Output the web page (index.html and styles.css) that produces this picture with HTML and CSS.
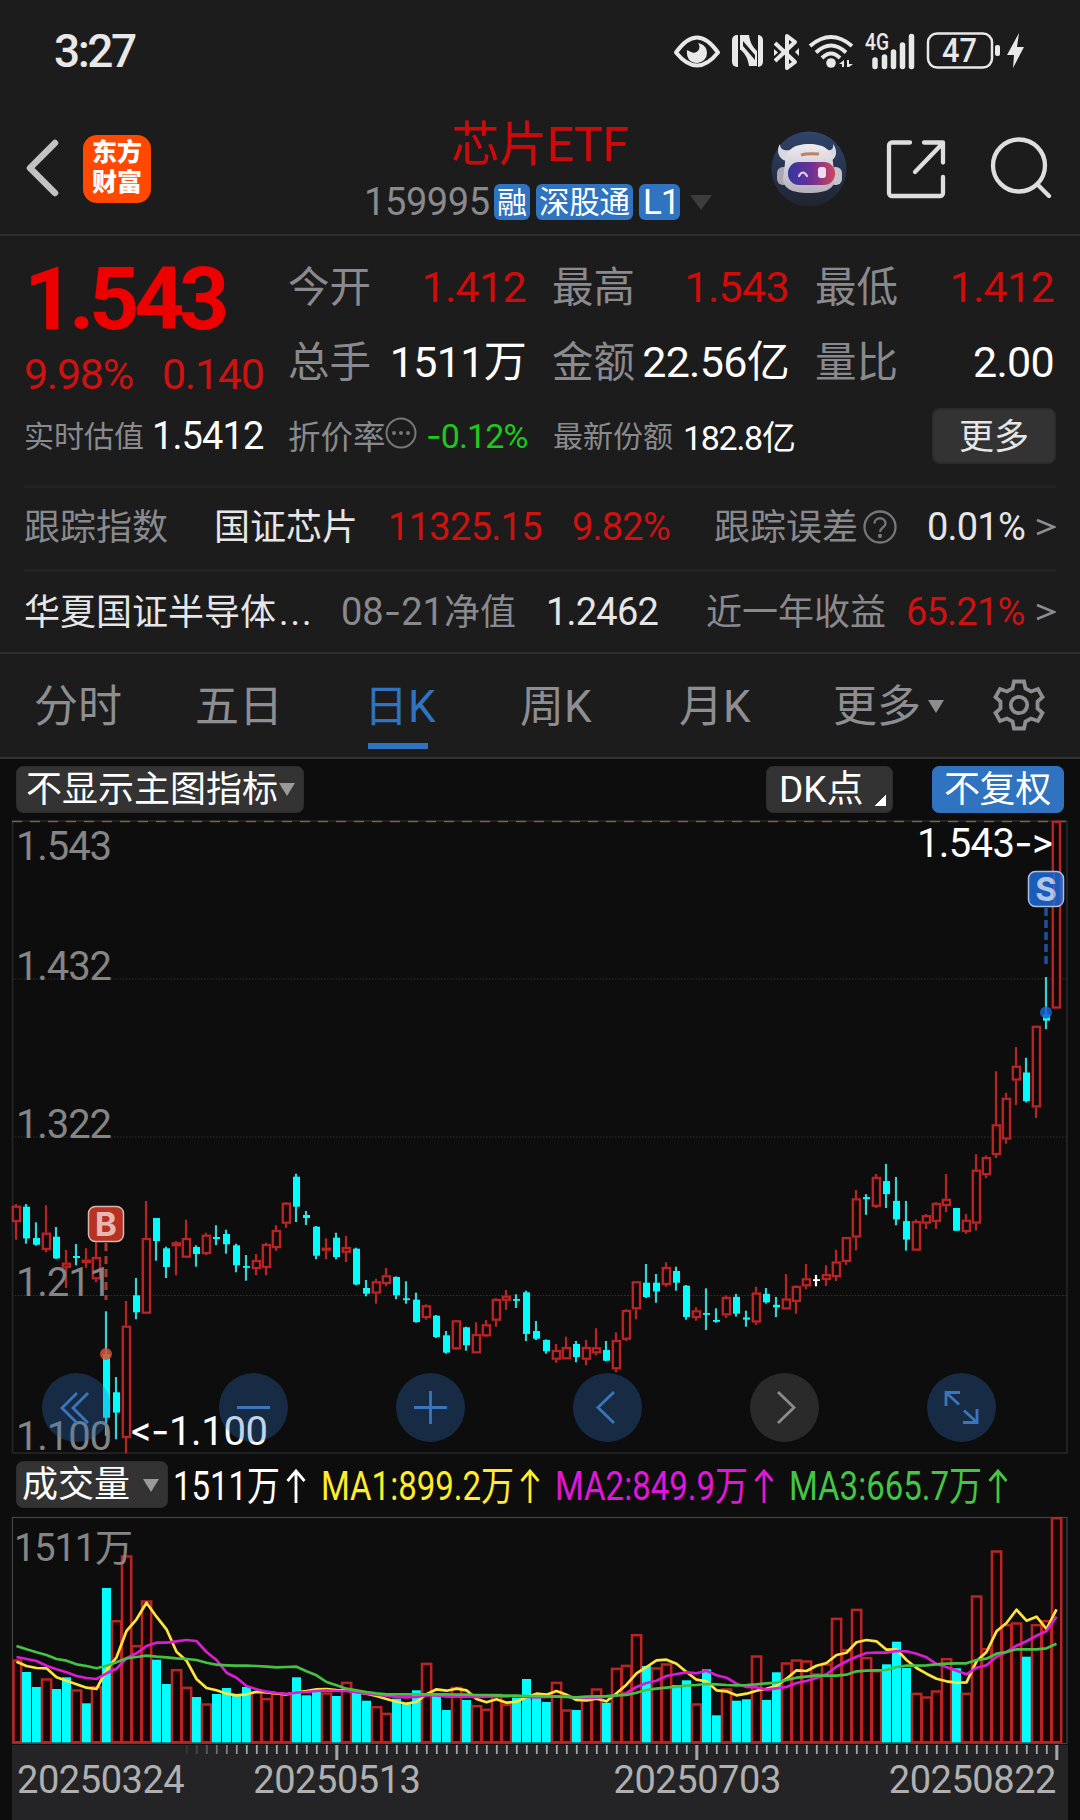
FILE: index.html
```html
<!DOCTYPE html>
<html lang="zh-CN">
<head>
<meta charset="utf-8">
<title>芯片ETF 159995</title>
<link rel="stylesheet" href="styles.css">
</head>
<body>
<div class="status">
  <span class="clock">3:27</span>
  <svg class="status-icons" width="352" height="48" viewBox="672 26 352 48" fill="#e8e8e8">
    <path d="M676 52.500q21-30 42 0q-21 26-42 0z" fill="none" stroke="#e8e8e8" stroke-width="4" stroke-linejoin="round"/>
    <path d="M698 43c4 5-1 12-7 9l-4-2c-1 9 4 13 10 13a10 10 0 0 0 10-10c0-6-4-9-9-10z"/>
    <path d="M738 35v32h-1a5 5 0 0 1-5-5V40a5 5 0 0 1 5-5z"/>
    <path d="M758 67V35a5 5 0 0 1 5 5v22a5 5 0 0 1-5 5z"/>
    <path d="M740 35h9c1 8 4 12 8 16v15h-8c-1-8-4-12-8-16l-1 0zM743 41v5l12 14v-5z" fill-rule="evenodd"/>
    <path d="M775 43l20 19-8 6V36l8 6-20 19" fill="none" stroke="#e8e8e8" stroke-width="4" stroke-linejoin="round"/>
    <path d="M774 49l4 3.500-4 3.500zM799 48l-4 4 4 4z"/>
    <g fill="none" stroke="#e8e8e8" stroke-width="4"><path d="M810 46q21-18 42 0M816 52.500q15-14 30 0M822 58q9-9 18 0"/></g>
    <circle cx="831" cy="63" r="4.800"/>
    <path d="M844 60v7h-2v-3h-3zM849 60v4h4l-4 3h-2v-7z"/>
    <text class="net" x="865" y="50" textLength="24" lengthAdjust="spacingAndGlyphs">4G</text>
    <g stroke="#e8e8e8" stroke-width="5.500" stroke-linecap="round"><path d="M875 60v6.500M884.500 57v9.500M893.500 52v14.500M902.500 45v21.500M911.500 36.500v30"/></g>
    <rect x="928" y="33.500" width="64" height="34" rx="9" fill="none" stroke="#e8e8e8" stroke-width="2.500"/>
    <text class="bat" x="942" y="62" textLength="35" lengthAdjust="spacingAndGlyphs">47</text>
    <rect x="995" y="45" width="5" height="11" rx="2"/>
    <path d="M1019 33l-12 22h7l-1 13 11-21h-7z"/>
  </svg>
</div>

<header class="head">
  <svg class="back" width="36" height="60" viewBox="0 0 36 60"><path d="M31 5L6 30l25 25" fill="none" stroke="#c2c2c2" stroke-width="6.500" stroke-linecap="round" stroke-linejoin="round"/></svg>
  <div class="logo"><span>东方</span><span>财富</span></div>
  <div class="title">
    <h1>芯片ETF</h1>
    <div class="code"><span class="num">159995</span><b>融</b><b class="wide">深股通</b><b class="lv">L1</b><i></i></div>
  </div>
  <svg class="robot" width="76" height="76" viewBox="0 0 76 76">
    <defs>
      <linearGradient id="sky" x1="0" y1="0" x2="0" y2="1"><stop offset="0" stop-color="#314569"/><stop offset=".5" stop-color="#27334f"/><stop offset="1" stop-color="#20242e"/></linearGradient>
      <linearGradient id="visor"><stop offset="0" stop-color="#3435a0"/><stop offset=".5" stop-color="#6b3195"/><stop offset="1" stop-color="#cc485c"/></linearGradient>
      <linearGradient id="shell" x1="0" y1="0" x2="0" y2="1"><stop offset="0" stop-color="#eeebef"/><stop offset="1" stop-color="#b5b0bc"/></linearGradient>
    </defs>
    <circle cx="38" cy="38" r="37.500" fill="url(#sky)"/>
    <path d="M9 13c-4 6-2 15 6 17l5-11c-6 1-11 0-11-6zM62 13c5 6 4 15-3 17l-5-11c5 1 9 0 8-6z" fill="#d9d7df"/>
    <rect x="6" y="36" width="13" height="18" rx="6" fill="#aaa6b2"/><rect x="58" y="36" width="13" height="18" rx="6" fill="#c6c3cd"/>
    <path d="M14 32c0-13 9-19 24-19s24 6 24 19l2 15c0 10-8 15-26 15s-26-5-26-15z" fill="url(#shell)"/>
    <rect x="17" y="31" width="47" height="23" rx="11" fill="url(#visor)"/>
    <path d="M28 45q4-7 8 0" fill="none" stroke="#ddd2ff" stroke-width="2.200" stroke-linecap="round"/>
    <rect x="47" y="36" width="8" height="11" rx="3" fill="#f0dcf2"/>
    <path d="M30 24q6-2 18-1" stroke="#bd8262" stroke-width="3" fill="none"/>
  </svg>
  <svg class="share" width="60" height="60" viewBox="0 0 60 60" fill="none" stroke="#dedede" stroke-width="4.300" stroke-linecap="round" stroke-linejoin="round"><path d="M24 3.500H6a3 3 0 0 0-3 3V54a3 3 0 0 0 3 3h48a3 3 0 0 0 3-3V38M38 3.500h19v20M56 5L29 33"/></svg>
  <svg class="search" width="62" height="62" viewBox="0 0 62 62" fill="none" stroke="#dedede" stroke-width="4.300" stroke-linecap="round"><circle cx="29" cy="29.500" r="26"/><path d="M48 49l11 11"/></svg>
</header>

<section class="quote">
  <div class="top">
    <div class="last">
      <div class="price">1.543</div>
      <div class="change"><span>9.98%</span><span>0.140</span></div>
    </div>
    <dl class="stats">
      <dt>今开</dt><dd class="red">1.412</dd><dt>最高</dt><dd class="red">1.543</dd><dt>最低</dt><dd class="red">1.412</dd>
      <dt>总手</dt><dd class="cn">1511万</dd><dt>金额</dt><dd class="cn">22.56亿</dd><dt>量比</dt><dd>2.00</dd>
    </dl>
  </div>
  <div class="row extra">
    <span class="lab">实时估值</span><span class="v1">1.5412</span>
    <span class="lab prem">折价率</span>
    <svg width="32" height="32" viewBox="0 0 32 32" fill="#77777a"><circle cx="16" cy="16" r="14.500" fill="none" stroke="#77777a" stroke-width="2"/><circle cx="9" cy="16" r="2"/><circle cx="16" cy="16" r="2"/><circle cx="23" cy="16" r="2"/></svg>
    <span class="v2 green"><i class="dash">-</i>0.12%</span>
    <span class="lab">最新份额</span><span class="v3">182.8亿</span>
    <button>更多</button>
  </div>
  <div class="row index">
    <span class="lab cjk">跟踪指数</span><span class="cjk">国证芯片</span><span class="red n1">11325.15</span><span class="red n2">9.82%</span>
    <span class="lab cjk">跟踪误差</span>
    <svg width="34" height="34" viewBox="0 0 34 34" fill="none" stroke="#77777a" stroke-width="2.300"><circle cx="17" cy="17" r="15.500"/><path d="M11.500 13.500c0-7 11-7 11 0 0 4-5.500 4-5.500 8.500"/><circle cx="17" cy="26" r="1" fill="#77777a"/></svg>
    <span class="n3">0.01%</span><svg class="go" width="20" height="20" viewBox="0 0 20 20"><path d="M1 3l17 7-17 7" fill="none" stroke="#8e8e92" stroke-width="2.600"/></svg>
  </div>
  <div class="row fund">
    <span class="name cjk">华夏国证半导体<i>...</i></span><span class="lab nav cjk"><i>08<i class="dash">-</i>21</i>净值</span><span class="n4">1.2462</span>
    <span class="lab cjk">近一年收益</span><span class="red n3">65.21%</span><svg class="go" width="20" height="20" viewBox="0 0 20 20"><path d="M1 3l17 7-17 7" fill="none" stroke="#8e8e92" stroke-width="2.600"/></svg>
  </div>
</section>

<nav class="tabs">
  <a>分时</a><a>五日</a><a class="on">日K</a><a>周K</a><a>月K</a><a>更多<i></i></a>
  <svg width="54" height="54" viewBox="-27 -27 54 54" fill="none" stroke="#8e8e92" stroke-width="3.800"><circle r="8.200"/><path d="M-5-23.500H5L6.500-16.500 12-13.500 19-16 23.500-8 18.500-3.500V3.500L23.500 8 19 16 12 13.500 6.500 16.500 5 23.500H-5L-6.500 16.500-12 13.500-19 16-23.500 8-18.500 3.500V-3.500L-23.500-8-19-16-12-13.500-6.500-16.500z"/></svg>
</nav>

<main>
  <div class="tools">
    <div class="chip main-ind">不显示主图指标<i></i></div>
    <div class="chip dk">DK点<i></i></div>
    <div class="chip fq">不复权</div>
  </div>
  <svg id="kline" width="1080" height="640" viewBox="0 818 1080 640"></svg>
  <div class="vol-head">
    <div class="chip vol">成交量<i></i></div>
    <svg width="900" height="50" viewBox="168 1460 900 50" class="legend">
      <text x="173" y="1499" textLength="107" lengthAdjust="spacingAndGlyphs" fill="#fff">1511万</text>
      <text x="321" y="1499" textLength="193" lengthAdjust="spacingAndGlyphs" fill="#ffec2b">MA1:899.2万</text>
      <text x="555" y="1499" textLength="193" lengthAdjust="spacingAndGlyphs" fill="#e216da">MA2:849.9万</text>
      <text x="789" y="1499" textLength="193" lengthAdjust="spacingAndGlyphs" fill="#45c544">MA3:665.7万</text>
      <g fill="none" stroke-width="2.800"><path stroke="#fff" d="M296 1502v-32m-8.500 10l8.500-10 8.500 10"/><path stroke="#ffec2b" d="M530 1502v-32m-8.500 10l8.500-10 8.500 10"/><path stroke="#e216da" d="M764 1502v-32m-8.500 10l8.500-10 8.500 10"/><path stroke="#45c544" d="M998 1502v-32m-8.500 10l8.500-10 8.500 10"/></g>
    </svg>
  </div>
  <svg id="volume" width="1080" height="230" viewBox="0 1515 1080 230"></svg>
  <div class="axis">
    <svg id="ticks" width="1056" height="20" viewBox="12 1745 1056 20"></svg>
    <div class="dates"><span>20250324</span><span>20250513</span><span>20250703</span><span>20250822</span></div>
  </div>
</main>
<script src="chart.js"></script>
</body>
</html>
```
FILE: styles.css
```css
* { box-sizing: border-box; margin: 0; padding: 0; }
body { width: 1080px; height: 1820px; overflow: hidden; background: #1c1c1c; color: #e6e6e6; font-family: Roboto, "Noto Sans CJK SC", sans-serif; white-space: nowrap; }
i { font-style: normal; }
svg { display: block; flex: none; }
.dash { font-family: Inter, sans-serif; }
.red { color: #cd1212; }
.green { color: #1ec81e; }
.lab { color: #8a8a8e; }

.status { height: 104px; display: flex; justify-content: space-between; padding: 0 56px 0 54px; }
.clock { font-size: 46px; font-weight: 500; line-height: 103px; letter-spacing: -2.500px; color: #e8e8e8; }
.status-icons { margin-top: 26px; }
.net { font: 500 24px Roboto, sans-serif; }
.bat { font: 500 33px Roboto, sans-serif; }

.head { height: 132px; border-bottom: 2px solid #2e2e2e; display: flex; }
.back { margin: 34px 0 0 24px; }
.logo { width: 68px; height: 68px; margin: 31px 0 0 23px; border-radius: 14px; background: #ff4800; color: #fff; font-size: 25px; font-weight: 900; line-height: 30px; padding-top: 3px; display: flex; flex-direction: column; align-items: center; }
.title { width: 352px; margin-left: 212px; }
h1 { margin-left: 88px; font-size: 48px; line-height: 54px; font-weight: 400; color: #cc0a0c; padding-top: 14px; letter-spacing: -.3px; }
.code { display: flex; align-items: center; height: 36px; margin-top: 12px; gap: 6px; }
.code .num { width: 125px; font-size: 38px; color: #8a8a8e; letter-spacing: -.4px; padding-left: 1px; }
.code b { height: 36px; padding: 2px 3px 0; border-radius: 6px; background: #3073c0; color: #fff; font-size: 30px; line-height: 34px; font-weight: 400; }
.code .wide { width: 97px; font-size: 30.500px; letter-spacing: -.3px; }
.code .lv { font-size: 35px; padding: 0 4px; width: 41px; line-height: 38px; letter-spacing: -1px; }
.code i { border: 11px solid transparent; border-top: 15px solid #3d3d3d; border-bottom: 0; margin-left: 4px; }
.robot { margin: 27px 0 0 56px; }
.share { margin: 35px 0 0 39px; }
.search { margin: 32px 0 0 44px; }

.quote { height: 418px; padding: 14px 24px 0; border-bottom: 2px solid #2e2e2e; }
.top { display: flex; height: 152px; }
.last { width: 265px; }
.price { height: 97px; font-size: 88px; line-height: 97px; font-weight: 700; color: #ec0000; letter-spacing: -5.500px; }
.change { display: flex; font-size: 43px; line-height: 55px; color: #cd1212; letter-spacing: -1.300px; }
.change span:first-child { width: 138px; }
.stats { display: grid; grid-template-columns: 82px 156px 108px 155px 109px 156px; grid-auto-rows: 75px; line-height: 74px; margin-left: -1px; }
.stats dt { font-size: 41.500px; color: #8a8a8e; padding: 1px 0 0 26px; }
.stats dt:nth-of-type(3n+1) { padding-left: 0; }
.stats dd { font-size: 43px; text-align: right; color: #fff; letter-spacing: -.7px; }
.stats dd.red { color: #cd0c0c; }
.stats .cn { font-size: 43px; letter-spacing: -.7px; margin-left: -20px; }
.row { display: grid; align-items: center; border-bottom: 3px solid #222; }
.cjk { position: relative; top: -3px; }
.extra { height: 86px; padding-bottom: 16px; grid-template-columns: 128px 136px 97px 41px 127px 130px 249px 124px; font-size: 30px; }
.extra .lab { margin-top: -3px; }
.extra .v1 { font-size: 38px; color: #fff; letter-spacing: -.9px; }
.extra .prem { font-size: 32.500px; }
.extra svg { margin-top: -6px; }
.extra .v2 { font-size: 34px; letter-spacing: -.9px; margin-top: -1px; }
.extra .v3 { font-size: 34px; color: #fff; letter-spacing: -1.300px; margin-top: -1px; }
.extra button { height: 56px; border: 2px solid #2c2c2c; border-radius: 8px; background: #333; color: #e6e6e6; font: 35px/46px "Noto Sans CJK SC", sans-serif; padding-bottom: 4px; }
.index { height: 84px; padding-bottom: 4px; font-size: 36px; grid-template-columns: 190px 174px 184px 142px 149px 64px 109px 20px; }
.fund { height: 83px; padding-bottom: 4px; font-size: 36px; border: 0; grid-template-columns: 317px 205px 160px 200px 130px 20px; }
.n1, .n2, .n3, .n4 { font-size: 38px; letter-spacing: -.8px; }
.n1 { letter-spacing: -.7px; }
.name i { letter-spacing: 2px; padding-left: 3px; }
.nav > i { font-size: 38px; }

.tabs { height: 105px; border-bottom: 2px solid #333; display: grid; grid-template-columns: 161px 169px 156px 159px 154px 159px 60px; padding-left: 34px; font-size: 44px; line-height: 106px; color: #8e8e92; }
.tabs a { height: 103px; }
.tabs .on { color: #3073c0; background: linear-gradient(#3073c0, #3073c0) 4px 89px / 60px 6px no-repeat; }
.tabs a:nth-child(6) i { display: inline-block; border: 8px solid transparent; border-top: 13px solid #8e8e92; border-bottom: 0; margin-left: 7px; vertical-align: 9px; }
.tabs svg { margin-top: 24px; }

main { background: #0d0d0d; height: 1061px; }
.tools { display: flex; height: 59px; padding: 7px 16px 0; }
.chip { height: 47px; border-radius: 7px; background: #333; border: 1px solid #2c2c2c; color: #fff; font-size: 36px; line-height: 46px; padding-left: 9px; display: flex; }
.main-ind { width: 288px; }
.chip i { border: 8px solid transparent; border-top: 13px solid #999; border-bottom: 0; margin: 16px 0 0 1px; height: 0; }
.dk { width: 127px; margin-left: 462px; padding-left: 12px; font-size: 37px; }
.dk i { border: 0; width: 12px; height: 12px; margin: 27px 0 0 10px; background: linear-gradient(135deg, transparent 50%, #fff 50%); }
.fq { width: 132px; margin-left: 39px; padding-left: 11px; background: #3073c0; border-color: #3073c0; letter-spacing: -.4px; }
.lbl { font: 40px Roboto, sans-serif; fill: #858585; }
.mark { font: 40px Roboto, sans-serif; fill: #fff; }
.badge { font: 700 33px Inter, sans-serif; fill: #fff; fill-opacity: .68; text-anchor: middle; }
.vol-head { display: flex; height: 57px; padding: 3px 0 0 16px; }
.vol { width: 152px; padding-left: 5px; line-height: 47px; }
.vol i { margin: 17px 0 0 13px; }
.legend { font-size: 40px; margin-right: -20px; }
.axis { margin: 0 12px; height: 75px; background: #242426; }
.dates { display: flex; padding: 0 12px 0 5px; font-size: 38px; line-height: 31px; color: #b0b0b0; letter-spacing: -.45px; }
.dates span:nth-child(2) { margin-left: 69px; }
.dates span:nth-child(3) { margin-left: 193px; }
.dates span:nth-child(4) { margin-left: auto; }
```
FILE: chart.js
```js
// Candles: kind (r = up, c = down, w = flat), then high, body top, body bottom, low.
// Each block has its own origin and resolution (units per pixel).
const BLOCKS = [
  { y0: 1150, k: 3, rows: `r162,167,216,269 c162,170,265,281 c217,264,284,287 r166,248,300,307 c231,260,325,327 r300,338,353,414 c282,318,324,346 r295,329,339,353 r262,321,388,397
c484,612,803,857 c681,727,788,868 r453,527,864,910 c384,436,487,508 r153,264,491,491 c204,204,273,332 c290,295,351,384 r273,277,289,376 r209,264,323,323
c286,291,312,350 r248,254,312,315 c226,261,267,285 c239,252,283,311 c281,286,346,367 c315,348,353,392 r312,330,357,375 r278,282,354,376 r226,240,294,302
r156,158,221,233 c71,80,170,216 c183,195,204,225 c228,230,317,328 r265,293,302,328 c248,263,321,328 r257,291,308,336 c293,296,403,406
c390,414,431,439 r386,394,431,461 r354,376,402,409 c379,381,436,448 c394,445,448,461 c428,449,516,518 r463,466,504,509 c495,497,561,564 c543,556,608,611
r510,511,598,600 c530,532,586,602 r517,552,610,610 r510,523,559,561 r445,447,512,530 r420,437,452,479 c433,447,452,474 c422,427,552,573 c513,543,566,570
c568,570,604,611 r582,600,629,638 r560,591,628,628 c573,582,621,637 r570,591,629,646 r535,592,610,616 c573,600,632,634 r547,570,658,667 r478,480,569,573
r394,394,478,508 c342,398,441,444 c372,398,424,458 r337,351,405,410 c350,363,398,422 c405,407,501,509 r472,481,504,512 c415,489,494,540 c475,510,513,518` },
  { y0: 820, k: 2.376, rows: `r1130,1133,1177,1183 c1126,1133,1173,1180 c1166,1182,1187,1204 r1109,1123,1194,1200 c1112,1126,1146,1149 c1133,1152,1158,1181 r1079,1137,1163,1163
r1106,1107,1145,1173 r1055,1089,1108,1115 w1081,1091,1095,1108 r1058,1079,1093,1107 r1021,1049,1086,1095 r991,991,1050,1057 r879,899,992,1023 c889,896,901,938
r841,848,919,922 c817,858,889,922 c848,905,949,963 c905,953,997,1023 r949,953,1023,1023 r936,939,959,972 r908,910,955,972 r841,900,917,932 c922,922,976,976
r936,950,979,984 r794,831,959,975 r797,801,844,851 r597,723,796,803 r648,660,759,769 r539,584,619,677 c565,600,668,671 r489,489,683,708 c373,462,477,497 r2,2,448,448` }
];
const VOL = `r658 c696 c741 r715 c747 c712 r748 c790 r738 c444 r540 r346 r615 r481 c659 c732 r687 r740 c771 r790 c762 c744 c766 c741 r754 r774 r757 r760 c712 c766 c755 r757 c768 r725 c757
c782 r798 r818 c776 c789 c751 r668 c764 c810 r740 c780 r795 r806 r761 r791 c773 c717 c772 c786 r725 r808 c810 r777 r745 c788 r683 r674 r582 c678 r682 r670 c735 c721 r790 c688 c826 r745
c782 c778 r646 c780 c697 r667 r658 r661 r700 r670 r533 r627 r506 r651 r690 c673 c605 c684 r758 r769 r751 r654 c685 r758 r466 r624 r331 r552 r547 c650 r552 r540 r231`;
const MA = {
  '#ffe53b': [665,678,684,685,712,722,733,743,747,690,652,573,538,488,530,568,635,662,717,744,751,761,766,763,755,757,760,763,757,753,748,747,750,751,757,761,768,777,785,791,786,763,748,752,746,751,777,787,778,788,785,771,761,764,753,764,780,781,776,784,760,734,700,681,661,659,671,696,719,724,751,754,766,761,752,746,737,716,691,693,677,669,645,638,607,600,604,629,628,660,684,701,716,724,728,727,664,636,574,549,509,542,530,567,508],
  '#dc1cd4': [651,657,663,677,688,697,708,714,717,700,686,655,640,618,608,608,604,600,603,636,660,698,713,738,748,755,759,762,758,756,753,751,753,753,757,760,764,767,771,772,771,766,766,770,770,770,771,770,769,769,768,771,772,771,769,770,773,774,773,770,767,759,741,729,722,708,702,697,700,692,706,713,731,741,742,749,745,741,729,723,714,703,680,664,650,639,638,638,633,634,641,652,672,681,692,703,683,676,650,636,617,604,587,573,530],
  '#47c043': [618,628,637,645,657,662,673,678,685,677,667,655,651,647,650,652,655,657,660,668,674,676,677,677,678,680,682,681,680,694,706,726,736,746,751,756,760,763,763,763,763,763,763,763,764,764,765,765,766,767,767,768,768,769,770,771,772,770,769,768,766,765,758,750,746,743,740,737,735,732,733,735,736,735,733,730,728,720,713,710,707,707,707,704,694,692,691,690,681,677,677,676,673,671,670,670,660,656,641,636,628,628,628,625,611]
};
const x = i => 16 + 10 * i;
const RED = '#b92525', CYAN = '#00ffff';
const n = v => +v.toFixed(1);

// price chart
let k = '<rect x="12.500" y="821" width="1054.500" height="632" fill="none" stroke="#282828" stroke-width="1.500"/>';
k += '<path d="M12 821.500H1067" stroke="#756548" stroke-width="1.300" stroke-dasharray="10 8"/>';
for (const y of [979, 1137, 1295.5]) k += `<path d="M12 ${y}H1067" stroke="#303030" stroke-dasharray="1.500 1.500"/>`;
let i = 0;
for (const b of BLOCKS) for (const s of b.rows.split(/\s+/)) {
  const [h, t, d, l] = s.slice(1).split(',').map(v => b.y0 + v / b.k), c = x(i++);
  if (s[0] === 'r') {
    k += `<path d="M${c} ${n(h)}V${n(t)}M${c} ${n(d)}V${n(l)}" stroke="${RED}" stroke-width="2.200"/>`;
    k += `<rect x="${n(c - 3.2)}" y="${n(t + 1)}" width="7.200" height="${n(Math.max(d - t - 2, .8))}" fill="#170505" stroke="${RED}" stroke-width="2.300"/>`;
  } else {
    const f = s[0] === 'w' ? '#fff' : CYAN;
    k += `<path d="M${c} ${n(h)}V${n(l)}" stroke="${s[0] === 'w' ? f : '#35d5d5'}" stroke-width="2.200"/><rect x="${c - 3}" y="${n(t)}" width="7" height="${n(Math.max(d - t, 1.8))}" fill="${f}"/>`;
  }
}
for (const [t, y] of [['1.543', 860], ['1.432', 979.5], ['1.322', 1138], ['1.211', 1296], ['1.100', 1450]])
  k += `<text class="lbl" x="16" y="${y}" textLength="96">${t}</text>`;
k += '<text class="mark" x="917" y="857" textLength="136">1.543<tspan class="dash">-</tspan>&gt;</text>';
k += '<text class="mark" x="131" y="1445" textLength="137">&lt;<tspan class="dash">-</tspan>1.100</text>';
k += '<path d="M106 1243v57" stroke="#a63c2c" stroke-width="3" stroke-dasharray="8 5"/><circle cx="106" cy="1354" r="6" fill="#d5523a" fill-opacity=".85"/>';
k += '<path d="M1046 908v56" stroke="#1d5298" stroke-width="3.500" stroke-dasharray="8 4"/><circle cx="1046" cy="1012.500" r="6" fill="#1a63d0" fill-opacity=".85"/>';
k += '<rect x="88.500" y="1206.500" width="35" height="35" rx="7" fill="#b73223" stroke="#d7b7b0" stroke-width="1.500"/><text class="badge" x="106" y="1236">B</text>';
k += '<rect x="1028.500" y="871.500" width="35" height="35" rx="7" fill="#1a5cba" stroke="#aebfd8" stroke-width="1.500"/><text class="badge" x="1046" y="901">S</text><path d="M1054 873v32M1061 873v32" stroke="#b060b0" stroke-opacity=".4" stroke-width="1.500"/>';
const icons = ['M77 1393l-15 15 15 15M88 1393l-15 15 15 15', 'M237 1407.500h33', 'M414 1407.500h33M430.500 1391v33', 'M614 1392l-16 15.500 16 15.500', 'M778 1392l16 15.500-16 15.500',
  'M946 1406v-13.500h14M946 1392.500l13 12M977 1409v13.500h-14M977 1422.500l-13-12'];
icons.forEach((d, j) => {
  const gray = j === 4;
  k += `<circle cx="${76.5 + 177 * j}" cy="1407.500" r="34.500" fill="${gray ? '#fff' : '#3073c2'}" fill-opacity="${gray ? .12 : .3}"/><path d="${d}" fill="none" stroke="${gray ? '#8c8c8c' : '#3a76be'}" stroke-width="2.800"/>`;
});
document.getElementById('kline').innerHTML = k;

// volume chart
const vy = v => 1440 + v / 3;
let v = '<rect x="12.500" y="1517.500" width="1054.500" height="226" fill="none" stroke="#444" stroke-width="1.200"/>';
VOL.split(/\s+/).forEach((s, j) => {
  const y = n(vy(+s.slice(1))), c = x(j) + .5;
  if (s[0] === 'r') { const l = j ? c - 4.5 : 13.5; v += `<rect x="${l}" y="${n(y + 1.2)}" width="${c + 4.7 - l}" height="${n(1741 - y)}" fill="#170505" stroke="${RED}" stroke-width="2.500"/>`; }
  else v += `<rect x="${c - 4.5}" y="${y}" width="9" height="${n(1742.5 - y)}" fill="${CYAN}"/>`;
});
for (const col of ['#ffe53b', '#dc1cd4', '#47c043'])
  v += `<polyline points="${MA[col].map((p, j) => (x(j) + .5) + ',' + n(vy(p))).join(' ')}" fill="none" stroke="${col}" stroke-width="2.700" stroke-linejoin="round"/>`;
v += '<text class="lbl" x="14" y="1561" style="font-size:38px" textLength="119">1511万</text>';
document.getElementById('volume').innerHTML = v;

// time axis ticks
let t = '';
for (let j = 17; j < 105; j++) {
  const major = j === 32 || j === 68 || j === 104;
  t += `<path d="M${x(j) + .8} 1745v${major ? 15 : 9}" stroke="#a5a5a5" stroke-opacity="${Math.min(1, (j - 16) / 7)}" stroke-width="${major ? 3 : 1.8}"/>`;
}
document.getElementById('ticks').innerHTML = t;
```
